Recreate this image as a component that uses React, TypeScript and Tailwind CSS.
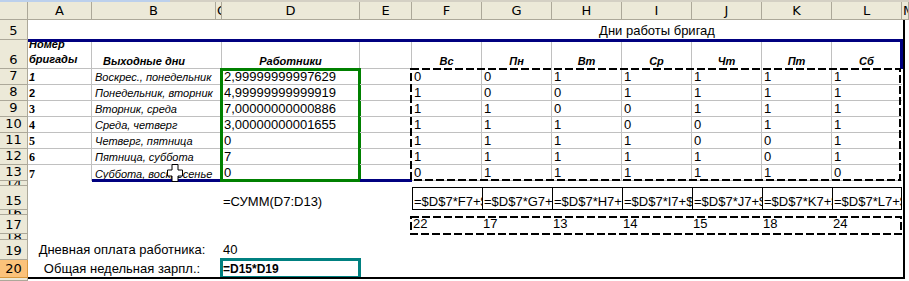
import React from "react";

const dayNames = ["Вс", "Пн", "Вт", "Ср", "Чт", "Пт", "Сб"];
const colLetters = ["F", "G", "H", "I", "J", "K", "L"];
const matrix = [
  [0, 0, 1, 1, 1, 1, 1],
  [1, 0, 0, 1, 1, 1, 1],
  [1, 1, 0, 0, 1, 1, 1],
  [1, 1, 1, 0, 0, 1, 1],
  [1, 1, 1, 1, 0, 0, 1],
  [1, 1, 1, 1, 1, 0, 1],
  [0, 1, 1, 1, 1, 1, 0],
];
const workers = [
  "2,99999999997629",
  "4,99999999999919",
  "7,00000000000886",
  "3,00000000001655",
  "0",
  "7",
  "0",
];
const offDays = [
  "Воскрес., понедельник",
  "Понедельник, вторник",
  "Вторник, среда",
  "Среда, четверг",
  "Четверг, пятница",
  "Пятница, суббота",
  "Суббота, воскресенье",
];
const brigadeNums = [
  { t: "1", cls: "font-bold italic text-[11px]" },
  { t: "2", cls: "font-bold text-[11px]" },
  { t: "3", cls: "font-bold text-[12px] font-['Liberation_Serif',serif]" },
  { t: "4", cls: "font-bold text-[12px] font-['Liberation_Serif',serif]" },
  { t: "5", cls: "font-bold text-[12px] font-['Liberation_Serif',serif]" },
  { t: "6", cls: "font-bold text-[12px] font-['Liberation_Serif',serif]" },
  { t: "7", cls: "font-bold text-[12px] font-['Liberation_Serif',serif]" },
];
const totals = [22, 17, 13, 14, 15, 18, 24];

const headerCols = [
  { l: "", w: "w-[28px]", align: "justify-center" },
  { l: "A", w: "w-[64px]", align: "justify-center" },
  { l: "B", w: "w-[124px]", align: "justify-center" },
  { l: "C", w: "w-[6px]", align: "justify-start pl-[1px]" },
  { l: "D", w: "w-[138px]", align: "justify-center" },
  { l: "E", w: "w-[52px]", align: "justify-center" },
  { l: "F", w: "w-[70px]", align: "justify-center" },
  { l: "G", w: "w-[70px]", align: "justify-center" },
  { l: "H", w: "w-[70px]", align: "justify-center" },
  { l: "I", w: "w-[70px]", align: "justify-center" },
  { l: "J", w: "w-[70px]", align: "justify-center" },
  { l: "K", w: "w-[70px]", align: "justify-center" },
  { l: "L", w: "w-[70px]", align: "justify-center" },
  { l: "M", w: "w-[7px]", align: "justify-start pl-[1px]" },
];

function RowHead({
  label,
  hClass,
  active = false,
  center = false,
}: {
  label: string;
  hClass: string;
  active?: boolean;
  center?: boolean;
}) {
  return (
    <div
      className={`${hClass} w-[28px] shrink-0 flex ${center ? "items-center" : "items-end"} justify-center overflow-hidden border-r border-b ${
        active ? "bg-[#fbc27a] border-[#d8983e]" : "bg-[#ece9d8] border-[#aca899]"
      } font-['DejaVu_Sans',sans-serif] text-[13px] leading-[15px]`}
    >
      <span className={center ? "" : "pb-[1px]"}>{label}</span>
    </div>
  );
}

function DashedBox({ w, h }: { w: number; h: number }) {
  return (
    <svg width={w} height={h} className="block">
      <rect
        x={1}
        y={1}
        width={w - 2}
        height={h - 2}
        fill="none"
        stroke="#000"
        strokeWidth={2}
        strokeDasharray="8 3"
      />
    </svg>
  );
}

function Cursor() {
  return (
    <svg width="16" height="18" viewBox="0 0 16 18" className="block">
      <polygon
        points="5,0.5 11,0.5 11,6 15.5,6 15.5,12 11,12 11,17.5 5,17.5 5,12 0.5,12 0.5,6 5,6"
        fill="#fff"
        stroke="#000"
        strokeWidth="1"
      />
    </svg>
  );
}

export default function App() {
  return (
    <div className="relative w-[909px] h-[281px] overflow-hidden bg-white text-black font-['Liberation_Sans',Arial,sans-serif]">
      {/* top strip */}
      <div className="flex h-[2px]">
        <div className="w-[170px] bg-[#bcd0ec]" />
        <div className="flex-1 bg-[#d4d0c4]" />
      </div>

      {/* column headers */}
      <div className="flex h-[18px]">
        {headerCols.map((c, i) => (
          <div
            key={i}
            className={`${c.w} shrink-0 h-full flex items-center ${c.align} overflow-hidden whitespace-nowrap bg-[#ece9d8] border-r border-b border-[#aca899] font-['DejaVu_Sans',sans-serif] text-[13px] leading-[15px]`}
          >
            {c.l}
          </div>
        ))}
      </div>

      {/* row 5 */}
      <div className="flex h-[20px]">
        <RowHead label="5" hClass="h-[20px]" />
        <div className="w-[384px] shrink-0" />
        <div className="w-[490px] shrink-0 flex items-end justify-center pb-[2px] text-[13px] leading-[15px] whitespace-nowrap">
          Дни работы бригад
        </div>
      </div>

      {/* row 6 */}
      <div className="flex h-[29px]">
        <RowHead label="6" hClass="h-[29px]" />
        <div className="relative flex">
          <div className="w-[64px] shrink-0 flex items-end pl-[1px] pb-[1px] border-r border-b border-[#c0c0c0] font-bold italic text-[11px] leading-[15px]">
            <div>
              Номер
              <br />
              бригады
            </div>
          </div>
          <div className="w-[130px] shrink-0 flex items-end pl-[11px] border-r border-b border-[#c0c0c0] font-bold italic text-[11px] leading-[13px] whitespace-nowrap">
            Выходные дни
          </div>
          <div className="w-[138px] shrink-0 flex items-end justify-center border-r border-b border-[#c0c0c0] font-bold italic text-[11px] leading-[13px]">
            Работники
          </div>
          <div className="w-[52px] shrink-0 border-r border-b border-[#c0c0c0]" />
          {dayNames.map((d) => (
            <div
              key={d}
              className="w-[70px] shrink-0 flex items-end justify-center pb-[1px] border-r border-[#c0c0c0] font-bold italic text-[11px] leading-[13px]"
            >
              {d}
            </div>
          ))}
          <div className="pointer-events-none absolute -top-[1px] left-0 w-[875px] h-[30px] border-t-[3px] border-r-[3px] border-[#000080]" />
        </div>
      </div>

      {/* rows 7-13 */}
      <div className="flex h-[112px]">
        <div className="flex flex-col">
          {[7, 8, 9, 10, 11, 12, 13].map((n) => (
            <RowHead key={n} label={String(n)} hClass="h-[16px]" />
          ))}
        </div>
        <div className="w-[64px] shrink-0 flex flex-col">
          {brigadeNums.map((b, i) => (
            <div
              key={b.t}
              className={`h-[16px] flex items-end pl-[1px] border-r border-[#c0c0c0] ${i < 6 ? "border-b" : ""} leading-[14px] ${b.cls}`}
            >
              {b.t}
            </div>
          ))}
        </div>
        <div className="relative w-[130px] shrink-0 flex flex-col">
          {offDays.map((t, i) => (
            <div
              key={t}
              className={`h-[16px] flex items-end pl-[3px] border-[#c0c0c0] ${i < 6 ? "border-b" : ""} italic text-[11px] leading-[13px] whitespace-nowrap`}
            >
              {t}
            </div>
          ))}
          <div className="pointer-events-none absolute left-0 right-0 -bottom-[1px] h-[3px] bg-[#000080]" />
          <div className="pointer-events-none absolute left-[75px] top-[95px]">
            <Cursor />
          </div>
        </div>
        <div className="relative w-[138px] shrink-0 flex flex-col">
          {workers.map((t, i) => (
            <div
              key={i}
              className="h-[16px] flex items-end pl-[2px] border-b border-[#c0c0c0] text-[13px] leading-[15px] whitespace-nowrap"
            >
              {t}
            </div>
          ))}
          <div className="pointer-events-none absolute -left-[2px] -right-[1px] -top-[1px] -bottom-[1px] border-[3px] border-[#008000]" />
        </div>
        <div className="relative w-[52px] shrink-0 flex flex-col">
          {workers.map((_, i) => (
            <div key={i} className="h-[16px] border-b border-[#c0c0c0]" />
          ))}
          <div className="pointer-events-none absolute left-0 right-0 -bottom-[1px] h-[3px] bg-[#000080]" />
        </div>
        <div className="relative w-[490px] shrink-0 flex flex-col">
          {matrix.map((row, r) => (
            <div key={r} className="flex h-[16px]">
              {row.map((v, c) => (
                <div
                  key={c}
                  className={`w-[70px] shrink-0 flex items-end pl-[2px] border-b border-[#c0c0c0] ${c < 6 ? "border-r" : ""} text-[13px] leading-[15px]`}
                >
                  {v}
                </div>
              ))}
            </div>
          ))}
          <div className="pointer-events-none absolute -left-[2px] -top-[1px]">
            <DashedBox w={491} h={113} />
          </div>
        </div>
      </div>

      {/* row 14 */}
      <div className="flex h-[5px]">
        <RowHead label="14" hClass="h-[5px]" center />
      </div>

      {/* row 15 */}
      <div className="flex h-[24px]">
        <RowHead label="15" hClass="h-[24px]" />
        <div className="w-[194px] shrink-0" />
        <div className="w-[138px] shrink-0 flex items-end pl-[1px] pb-[1px] text-[13px] leading-[15px] whitespace-nowrap">
          =СУММ(D7:D13)
        </div>
        <div className="w-[52px] shrink-0" />
        <div className="w-[490px] shrink-0 pt-[1px]">
          <div className="flex h-[23px] border-y border-black">
            {colLetters.map((c, i) => (
              <div
                key={c}
                className={`w-[70px] shrink-0 flex items-end pl-[1px] overflow-hidden whitespace-nowrap border-l border-black ${i === 6 ? "border-r" : ""} text-[13px] leading-[15px]`}
              >
                {`=$D$7*${c}7+$D$8*${c}8+$D$9*${c}9+$D$10*${c}10+$D$11*${c}11+$D$12*${c}12+$D$13*${c}13`}
              </div>
            ))}
          </div>
        </div>
      </div>

      {/* row 16 */}
      <div className="flex h-[5px]">
        <RowHead label="16" hClass="h-[5px]" center />
      </div>

      {/* row 17 */}
      <div className="flex h-[19px]">
        <RowHead label="17" hClass="h-[19px]" />
        <div className="w-[384px] shrink-0" />
        <div className="relative w-[490px] shrink-0 flex">
          {totals.map((t, i) => (
            <div
              key={i}
              className="w-[70px] shrink-0 flex items-end pl-[1px] pb-[3px] text-[13px] leading-[15px]"
            >
              {t}
            </div>
          ))}
          <div className="pointer-events-none absolute -left-[2px] top-[1px]">
            <DashedBox w={492} h={19} />
          </div>
        </div>
      </div>

      {/* row 18 */}
      <div className="flex h-[6px]">
        <RowHead label="18" hClass="h-[6px]" center />
      </div>

      {/* row 19 */}
      <div className="flex h-[20px]">
        <RowHead label="19" hClass="h-[20px]" />
        <div className="w-[188px] shrink-0 flex items-end justify-center pb-[3px] text-[13px] leading-[15px] whitespace-nowrap">
          Дневная оплата работника:
        </div>
        <div className="w-[6px] shrink-0" />
        <div className="w-[138px] shrink-0 flex items-end pl-[1px] pb-[3px] text-[13px] leading-[15px]">
          40
        </div>
      </div>

      {/* row 20 */}
      <div className="flex h-[18px]">
        <RowHead label="20" hClass="h-[18px]" active />
        <div className="w-[188px] shrink-0 flex items-end justify-center pb-[2px] text-[13px] leading-[15px] whitespace-nowrap">
          Общая недельная зарпл.:
        </div>
        <div className="w-[6px] shrink-0" />
        <div className="relative w-[138px] shrink-0 flex items-end pl-[1px] pb-[2px] font-bold text-[12px] leading-[14px]">
          =D15*D19
          <div className="pointer-events-none absolute -left-[2px] -right-[1px] -top-[2px] -bottom-[1px] border-[3px] border-[#008080]" />
        </div>
      </div>

      {/* row 21 */}
      <div className="flex h-[3px]">
        <RowHead label="21" hClass="h-[3px]" />
      </div>

      {/* print area frame */}
      <div className="pointer-events-none absolute left-[28px] top-[20px] w-[877px] h-[259px] border-r-2 border-b-2 border-black" />
    </div>
  );
}
